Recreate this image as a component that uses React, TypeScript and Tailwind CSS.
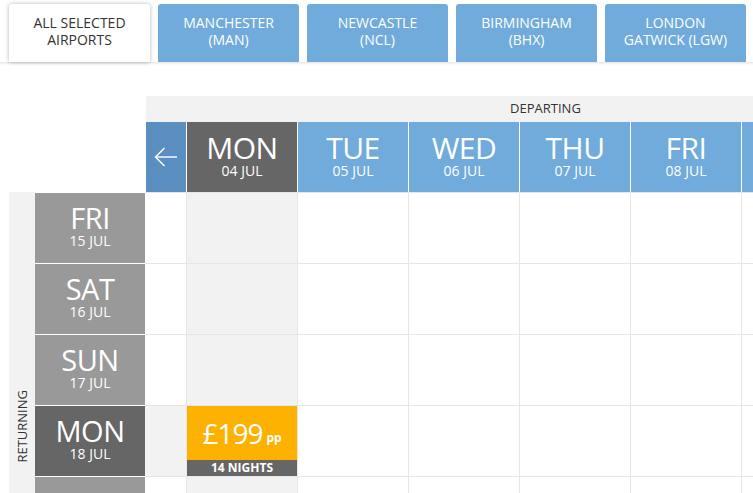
import React from "react";

const font = { fontFamily: '"Open Sans", "Noto Sans", sans-serif' };

const tabs = [
  ["ALL SELECTED", "AIRPORTS"],
  ["MANCHESTER", "(MAN)"],
  ["NEWCASTLE", "(NCL)"],
  ["BIRMINGHAM", "(BHX)"],
  ["LONDON", "GATWICK (LGW)"],
];

const days = [
  ["MON", "04 JUL", true],
  ["TUE", "05 JUL", false],
  ["WED", "06 JUL", false],
  ["THU", "07 JUL", false],
  ["FRI", "08 JUL", false],
  ["SAT", "09 JUL", false],
] as const;

const rows = [
  ["FRI", "15 JUL", false],
  ["SAT", "16 JUL", false],
  ["SUN", "17 JUL", false],
  ["MON", "18 JUL", true],
  ["", "", false],
] as const;

function Arrow() {
  return (
    <svg width="24" height="20" viewBox="0 0 24 20" fill="none" stroke="white" strokeWidth="1.4">
      <path d="M23 10H1.5" />
      <path d="M10.5 1L1.5 10L10.5 19" />
    </svg>
  );
}

export default function App() {
  return (
    <div className="w-[753px] h-[493px] overflow-hidden bg-white relative" style={font}>
      {/* tabs */}
      <div className="relative">
        <div className="flex gap-[8px] pl-[9px] pt-[4px] relative z-10">
          {tabs.map((t, i) => (
            <div
              key={i}
              className={
                "w-[141px] h-[58px] shrink-0 rounded-t-[3px] flex flex-col items-center justify-center pb-[4px] text-[14px] leading-[17px] " +
                (i === 0
                  ? "bg-white text-[#333] shadow-[0_0_4px_rgba(0,0,0,0.3)]"
                  : "bg-[#70abdb] text-white")
              }
            >
              <span>{t[0]}</span>
              <span>{t[1]}</span>
            </div>
          ))}
        </div>
        <div className="h-[3px] bg-gradient-to-b from-[#e6e6e6] to-white relative z-0" />
      </div>

      {/* header */}
      <div className="flex mt-[31px]">
        <div className="w-[146px] shrink-0" />
        <div className="flex flex-col">
          <div className="h-[26px] w-[607px] bg-[#f2f2f2] flex items-center justify-center text-[13px] text-[#333]">
            <span className="ml-[252px] mr-[60px]">DEPARTING</span>
          </div>
          <div className="flex h-[70px]">
            <div className="w-[40px] shrink-0 bg-[#5b8ec0] flex items-center justify-center">
              <Arrow />
            </div>
            {days.map(([d, dt, sel], i) => (
              <div
                key={i}
                className={
                  "w-[110px] shrink-0 ml-[1px] flex flex-col items-center justify-center pb-[4px] text-white " +
                  (sel ? "bg-[#666666]" : "bg-[#70abdb]")
                }
              >
                <span className="text-[30px] leading-[31px] tracking-[-0.5px] font-medium">{d}</span>
                <span className="text-[14px] leading-[16px]">{dt}</span>
              </div>
            ))}
          </div>
        </div>
      </div>

      {/* body */}
      <div className="flex">
        <div className="w-[26px] ml-[9px] shrink-0 bg-[#f2f2f2] h-[301px] flex flex-col justify-end items-center pb-[30px]">
          <span
            className="text-[13px] text-[#333] leading-none"
            style={{ writingMode: "vertical-rl", transform: "rotate(180deg)" }}
          >
            RETURNING
          </span>
        </div>
        <div className="flex flex-col">
          {rows.map(([d, dt, sel], r) => (
            <div key={r} className="flex h-[71px] shrink-0">
              <div
                className={
                  "w-[110px] shrink-0 border-t border-white flex flex-col items-center justify-center pb-[4px] text-white " +
                  (sel ? "bg-[#666666]" : "bg-[#999999]")
                }
              >
                {d && (
                  <>
                    <span className="text-[29px] leading-[30px] tracking-[-0.5px] font-medium">{d}</span>
                    <span className="text-[14px] leading-[16px]">{dt}</span>
                  </>
                )}
              </div>
              <div
                className={
                  "w-[41px] shrink-0 border-t border-[#e6e6e6] " + (sel ? "bg-[#f2f2f2]" : "bg-white")
                }
              />
              {days.map((_, c) => {
                const price = sel && c === 0;
                return (
                  <div
                    key={c}
                    className={
                      "w-[111px] shrink-0 border-t border-l border-[#e6e6e6] " +
                      (c === 0 ? "bg-[#f2f2f2]" : "bg-white")
                    }
                  >
                    {price && (
                      <div className="flex flex-col h-full">
                        <div className="h-[54px] bg-[#fdb100] flex items-center justify-center text-white">
                          <span className="text-[28px] leading-none tracking-[-1px]">£199</span>
                          <span className="text-[12px] font-bold ml-[4px] mt-[10px]">pp</span>
                        </div>
                        <div className="h-[16px] bg-[#666666] flex items-center justify-center text-white text-[12px] font-bold leading-none">
                          14 NIGHTS
                        </div>
                      </div>
                    )}
                  </div>
                );
              })}
            </div>
          ))}
        </div>
      </div>
    </div>
  );
}
